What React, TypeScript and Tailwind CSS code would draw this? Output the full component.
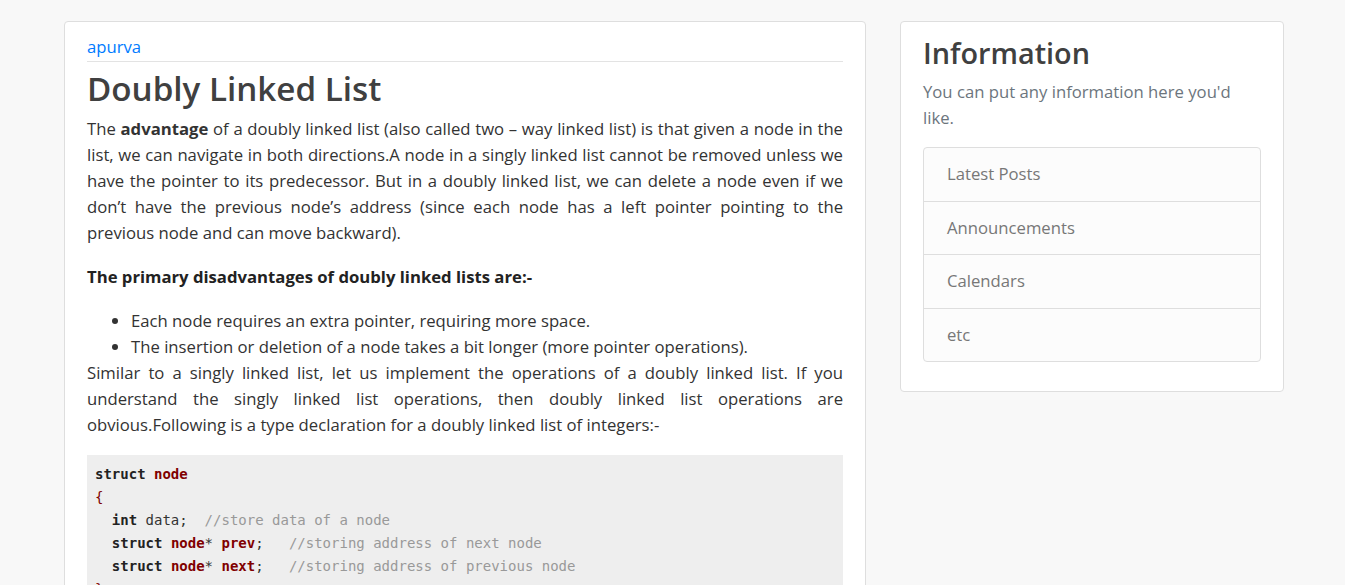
import React from 'react';

const sideLinks = ['Latest Posts', 'Announcements', 'Calendars', 'etc'];

function Kw({ children }: { children: React.ReactNode }) {
  return <span className="font-bold text-[#222]">{children}</span>;
}

function Nm({ children }: { children: React.ReactNode }) {
  return <span className="font-bold text-[#800000]">{children}</span>;
}

function Cm({ children }: { children: React.ReactNode }) {
  return <span className="text-[#999]">{children}</span>;
}

export default function App() {
  return (
    <div
      className="min-h-[585px] bg-[#f8f8f8] text-[#333]"
      style={{ fontFamily: '"Open Sans", "Noto Sans", sans-serif' }}
    >
      <div className="flex items-start gap-[34px] pl-[64px] pt-[21px]">
        {/* post */}
        <div className="w-[802px] rounded border border-[#dedede] bg-white px-[22px] pt-[12px] pb-6">
          <div className="border-b border-[#e3e3e3] pb-[1px]">
            <a href="#" className="text-[16.7px] leading-[26px] text-[#007bff]">
              apurva
            </a>
          </div>
          <h1 className="mt-[5px] text-[33.2px] font-semibold leading-[43px] text-[#404040]">
            Doubly Linked List
          </h1>
          <div className="mt-[6px] text-[16.7px] leading-[26px]">
            <p className="text-justify">
              The <strong>advantage</strong> of a doubly linked list (also called two – way linked list) is
              that given a node in the list, we can navigate in both directions.A node in a singly linked
              list cannot be removed unless we have the pointer to its predecessor. But in a doubly linked
              list, we can delete a node even if we don’t have the previous node’s address (since each node
              has a left pointer pointing to the previous node and can move backward).
            </p>
            <p className="mt-[18px] font-bold text-[#222]">The primary disadvantages of doubly linked lists are:-</p>
            <ul className="mt-[18px] list-disc pl-[44px]">
              <li>Each node requires an extra pointer, requiring more space.</li>
              <li>The insertion or deletion of a node takes a bit longer (more pointer operations).</li>
            </ul>
            <p className="text-justify">
              Similar to a singly linked list, let us implement the operations of a doubly linked list. If you
              understand the singly linked list operations, then doubly linked list operations are
              obvious.Following is a type declaration for a doubly linked list of integers:-
            </p>
          </div>
          <pre
            className="mt-[17px] bg-[#eee] px-2 py-[8px] text-[14px] leading-[23px] text-[#333]"
            style={{ fontFamily: '"DejaVu Sans Mono", monospace' }}
          >
            <Kw>struct</Kw> <Nm>node</Nm>
            {'\n'}
            <span className="text-[#800000]">{'{'}</span>
            {'\n  '}
            <Kw>int</Kw> data;  <Cm>//store data of a node</Cm>
            {'\n  '}
            <Kw>struct</Kw> <Nm>node</Nm>* <Nm>prev</Nm>;   <Cm>//storing address of next node</Cm>
            {'\n  '}
            <Kw>struct</Kw> <Nm>node</Nm>* <Nm>next</Nm>;   <Cm>//storing address of previous node</Cm>
            {'\n'}
            <span className="text-[#800000]">{'}'}</span>;
          </pre>
        </div>

        {/* sidebar */}
        <div className="w-[384px] rounded border border-[#dedede] bg-white px-[22px] pt-[12px] pb-[29px]">
          <h3 className="text-[28.8px] font-semibold leading-[38px] text-[#404040]">Information</h3>
          <p className="mt-[7px] text-[16.7px] leading-[26px] text-[#6c757d]">
            You can put any information here you'd like.
          </p>
          <ul className="mt-[16px] overflow-hidden rounded border border-[#dedede] bg-[#fcfcfc]">
            {sideLinks.map((l, i) => (
              <li
                key={l}
                className={
                  'px-[23px] py-[13px] text-[16.7px] leading-[26.5px] text-[#777] ' +
                  (i > 0 ? 'border-t border-[#dedede]' : '')
                }
              >
                {l}
              </li>
            ))}
          </ul>
        </div>
      </div>
    </div>
  );
}
